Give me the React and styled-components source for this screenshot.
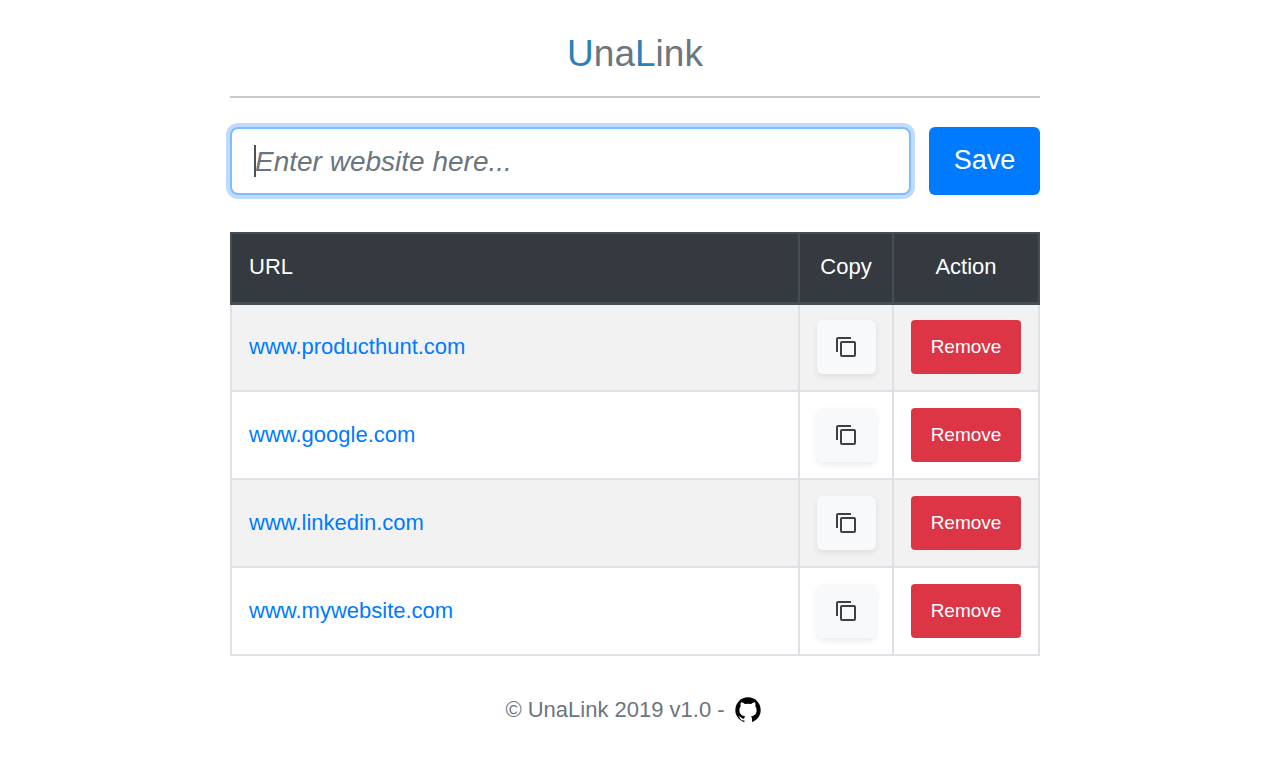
import React, { useState } from "react";
import styled, { createGlobalStyle } from "styled-components";

const GlobalStyle = createGlobalStyle`
  *, *::before, *::after { box-sizing: border-box; }
  body {
    margin: 0;
    background: #fff;
    color: #212529;
    font-family: "Liberation Sans", Arial, sans-serif;
    font-size: 22px;
    line-height: 34px;
  }
`;

const Page = styled.div`
  width: 100%;
  max-width: 842px;
  margin: 0 auto;
  padding: 30px 16px;
`;

const Title = styled.h1`
  margin: 0;
  padding-bottom: 18px;
  border-bottom: 2px solid #c8c8c8;
  color: #6c757d;
  font-size: 37px;
  font-weight: 300;
  line-height: 48px;
  text-align: center;
`;

const Accent = styled.span`
  color: #2a80b9;
`;

const Form = styled.form`
  display: flex;
  gap: 18px;
  margin: 29px 0 37px;
`;

const InputWrap = styled.div`
  position: relative;
  flex: 1;
  min-width: 0;
`;

const Caret = styled.span`
  position: absolute;
  top: 18px;
  left: 24px;
  width: 2px;
  height: 32px;
  background: #495057;
  pointer-events: none;
`;

const UrlInput = styled.input`
  display: block;
  width: 100%;
  height: 68px;
  padding: 2px 23px 0;
  border: 2px solid #80bdff;
  border-radius: 8px;
  outline: none;
  box-shadow: 0 0 0 4px #bfdbff;
  color: #495057;
  caret-color: ${(p) => (p.value ? "auto" : "transparent")};
  font: 28px "Liberation Sans", Arial, sans-serif;
  &::placeholder {
    color: #6c757d;
    font-style: italic;
    opacity: 1;
  }
`;

const SaveButton = styled.button`
  width: 111px;
  padding: 0 0 2px;
  border: 0;
  border-radius: 6px;
  background: #007bff;
  color: #fff;
  font: 27px "Liberation Sans", Arial, sans-serif;
  cursor: pointer;
`;

const Table = styled.table`
  width: 100%;
  border-collapse: collapse;
`;

const HeadCell = styled.th`
  width: ${(p) => p.$width || "auto"};
  height: 70px;
  padding: 0 ${(p) => (p.$align ? 17 : 16)}px 2px;
  border: 2px solid #454d55;
  border-bottom-width: 3px;
  background: #343a40;
  color: #fff;
  font-weight: 400;
  text-align: ${(p) => p.$align || "center"};
`;

const Row = styled.tr`
  background: ${(p) => (p.$striped ? "#f2f2f2" : "#fff")};
`;

const Cell = styled.td`
  height: 88px;
  padding: 0 ${(p) => (p.$align ? 17 : 16)}px;
  border: 2px solid #dee2e6;
  text-align: ${(p) => p.$align || "center"};
`;

const SiteLink = styled.a`
  display: block;
  padding-bottom: 1px;
  color: #007bff;
  text-decoration: none;
`;

const CopyButton = styled.button`
  display: flex;
  align-items: center;
  justify-content: center;
  width: 59px;
  height: 54px;
  margin: 0 auto;
  padding: 0;
  border: 0;
  border-radius: 6px;
  background: #f8f9fa;
  box-shadow: 0 3px 6px rgba(0, 0, 0, 0.08);
  cursor: pointer;
`;

const RemoveButton = styled.button`
  display: block;
  width: 110px;
  height: 54px;
  margin: 0 auto;
  padding: 0;
  border: 0;
  border-radius: 4px;
  background: #dc3545;
  color: #fff;
  font: 19px "Liberation Sans", Arial, sans-serif;
  cursor: pointer;
`;

const Footer = styled.footer`
  display: flex;
  align-items: center;
  justify-content: center;
  gap: 10px;
  margin-top: 37px;
  padding-right: 4px;
  color: #6c757d;
`;

const RepoLink = styled.a`
  display: flex;
  color: #000;
`;

const CopyIcon = () => (
  <svg width="20" height="20" viewBox="0 0 20 20" fill="none" stroke="#404040" strokeWidth="2" aria-hidden="true">
    <path d="M1 15V2Q1 1 2 1H15" />
    <rect x="5" y="5" width="14" height="14" rx="1" />
  </svg>
);

const GithubIcon = () => (
  <svg width="26" height="26" viewBox="0 0 78 78" aria-hidden="true">
    <circle cx="39" cy="39" r="38" fill="currentColor" />
    <path
      d="M18 16C23 16 27 19 30 21Q39 19 48 21C51 19 56 16 60 16Q63 22 61 28Q66 34 65 41C64 52 57 56 48 58Q51 61 51 66V78H28V70C20 72 17 68 15 64Q13 60 10 58C17 56 19 66 25 65Q28 65 28 63L30 58C20 56 14 51 13 41Q12 34 17 28Q15 22 18 16Z"
      fill="#fff"
    />
  </svg>
);

const initialSites = ["www.producthunt.com", "www.google.com", "www.linkedin.com", "www.mywebsite.com"];

export default function App() {
  const [sites, setSites] = useState(initialSites);
  const [value, setValue] = useState("");

  const save = (event) => {
    event.preventDefault();
    if (value.trim()) {
      setSites([...sites, value.trim()]);
      setValue("");
    }
  };

  return (
    <Page>
      <GlobalStyle />
      <Title>
        <Accent>U</Accent>na<Accent>L</Accent>ink
      </Title>
      <Form onSubmit={save}>
        <InputWrap>
          <UrlInput
            autoFocus
            aria-label="Website"
            placeholder="Enter website here..."
            value={value}
            onChange={(event) => setValue(event.target.value)}
          />
          {!value && <Caret />}
        </InputWrap>
        <SaveButton type="submit">Save</SaveButton>
      </Form>
      <Table>
        <thead>
          <tr>
            <HeadCell $align="left">URL</HeadCell>
            <HeadCell $width="94px">Copy</HeadCell>
            <HeadCell $width="146px">Action</HeadCell>
          </tr>
        </thead>
        <tbody>
          {sites.map((site, index) => (
            <Row key={site} $striped={index % 2 === 0}>
              <Cell $align="left">
                <SiteLink href={`http://${site}`}>{site}</SiteLink>
              </Cell>
              <Cell>
                <CopyButton type="button" aria-label={`Copy ${site}`} onClick={() => navigator.clipboard?.writeText(site)}>
                  <CopyIcon />
                </CopyButton>
              </Cell>
              <Cell>
                <RemoveButton type="button" onClick={() => setSites(sites.filter((item) => item !== site))}>
                  Remove
                </RemoveButton>
              </Cell>
            </Row>
          ))}
        </tbody>
      </Table>
      <Footer>
        <span>© UnaLink 2019 v1.0 -</span>
        <RepoLink href="https://github.com" aria-label="GitHub repository">
          <GithubIcon />
        </RepoLink>
      </Footer>
    </Page>
  );
}
